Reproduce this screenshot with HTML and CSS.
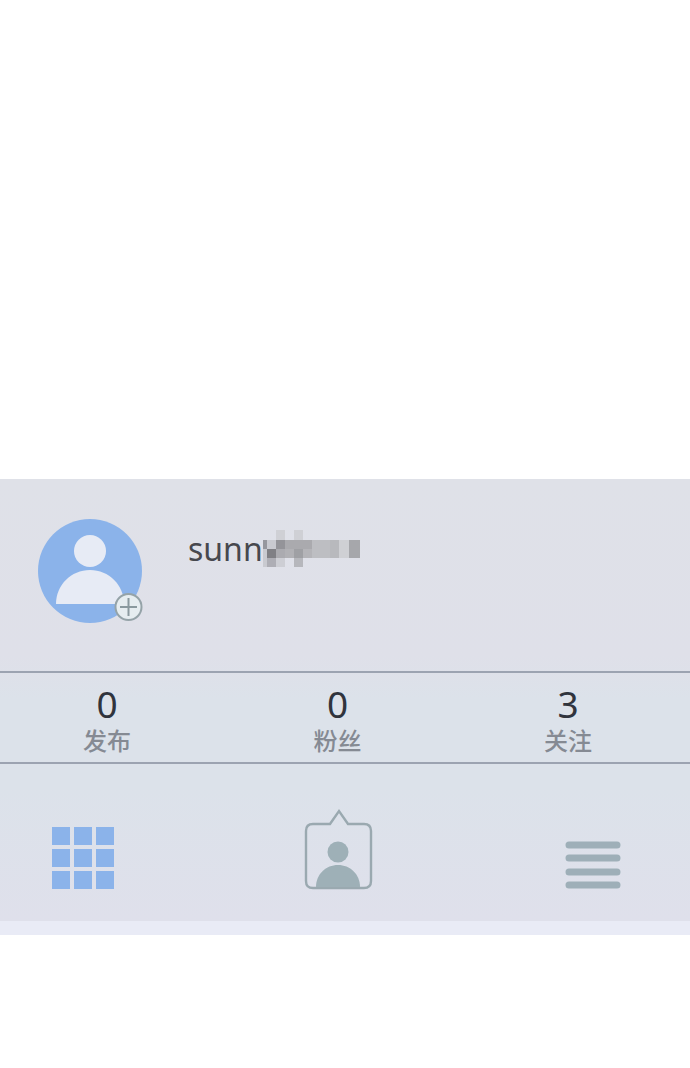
FILE: index.html
```html
<!DOCTYPE html>
<html lang="zh-CN">

<head>
    <meta charset="UTF-8">
    <meta name="viewport" content="width=device-width, initial-scale=1.0">
    <title>sunn</title>
    <link rel="stylesheet" href="styles.css">
</head>

<body>
    <main class="profile">
        <header class="user">
            <button class="avatar" aria-label="avatar">
                <svg width="106" height="106" viewBox="0 0 106 106">
                    <circle cx="53" cy="53" r="52" fill="#8bb3ea" />
                    <circle cx="53" cy="33" r="16" fill="#e7ebf5" />
                    <path d="M19 86c0-19 15-34 34-34s34 15 34 34z" fill="#e7ebf5" />
                    <circle cx="91.500" cy="89" r="13" fill="#e6edf0" stroke="#95a3a8" stroke-width="2" />
                    <path d="M83 89h17M91.500 80v18" stroke="#8a999e" stroke-width="2" />
                </svg>
            </button>
            <h1 class="name">
                <span>sunn</span>
                <!-- hidden part of the name -->
                <svg width="97" height="37" viewBox="0 0 97 37" shape-rendering="crispEdges">
                    <path d="M0 10h4v9H0z" fill="#96979d" />
                    <path d="M4 10h9v9H4z" fill="#c9cad0" />
                    <path d="M0 19h4v18H0z" fill="#c9cad0" />
                    <path d="M4 19h9v9H4z" fill="#808085" />
                    <path d="M4 28h9v9H4z" fill="#aeaeb5" />
                    <path d="M13 0h9v10h-9zM31 0h9v10h-9z" fill="#cfd0d5" />
                    <path d="M13 10h9v9h-9z" fill="#949499" />
                    <path d="M22 10h27v9H22z" fill="#aaaaae" />
                    <path d="M13 19h9v9h-9z" fill="#ababb0" />
                    <path d="M22 19h9v9h-9z" fill="#b1b1b5" />
                    <path d="M31 19h9v9h-9z" fill="#9fa0a4" />
                    <path d="M40 19h9v9h-9z" fill="#b4b4b8" />
                    <path d="M13 28h9v9h-9z" fill="#cdced4" />
                    <path d="M31 28h9v9h-9z" fill="#b6b7bc" />
                    <path d="M49 10h18v18H49z" fill="#bdbec2" />
                    <path d="M67 10h9v18h-9z" fill="#b8b9bd" />
                    <path d="M76 10h10v18H76z" fill="#cfd0d4" />
                    <path d="M86 10h11v18H86z" fill="#a6a7ab" />
                </svg>
            </h1>
        </header>

        <section class="stats">
            <a class="stat" href="#posts">
                <span class="count">0</span>
                <span class="label">发布</span>
            </a>
            <a class="stat" href="#fans">
                <span class="count">0</span>
                <span class="label">粉丝</span>
            </a>
            <a class="stat" href="#following">
                <span class="count">3</span>
                <span class="label">关注</span>
            </a>
        </section>

        <nav class="tabs">
            <button class="tab" aria-label="grid">
                <svg width="62" height="82" viewBox="0 0 62 82">
                    <path fill="#8bb3ea" d="M0 18h18v18H0zM22 18h18v18H22zM44 18h18v18H44zM0 40h18v18H0zM22 40h18v18H22zM44 40h18v18H44zM0 62h18v18H0zM22 62h18v18H22zM44 62h18v18H44z" />
                </svg>
            </button>
            <button class="tab" aria-label="tagged">
                <svg width="70" height="82" viewBox="0 0 70 82">
                    <path d="M8 15h17l9-13 9 13h16q7 0 7 7v50q0 7-7 7H8q-7 0-7-7V22q0-7 7-7z" fill="none" stroke="#9aa9b0" stroke-width="2.4" />
                    <circle cx="33" cy="43" r="10.500" fill="#9eb0b7" />
                    <path d="M11 78c0-13 10-22 22-22s22 9 22 22z" fill="#9eb0b7" />
                </svg>
            </button>
            <button class="tab" aria-label="list">
                <svg width="56" height="82" viewBox="0 0 56 82">
                    <path d="M4 36h48M4 49h48M4 63h48M4 76h48" stroke="#9eafb8" stroke-width="7" stroke-linecap="round" />
                </svg>
            </button>
        </nav>
    </main>
</body>

</html>
```
FILE: styles.css
```css
* {
    margin: 0;
    padding: 0;
    box-sizing: border-box;
}

body {
    background-color: white;
    font-family: "Noto Sans", "Noto Sans CJK SC", sans-serif;
    padding-top: 479px;
}

button {
    border: none;
    background: none;
    cursor: pointer;
}

svg {
    display: block;
    overflow: visible;
}

.profile {
    background-image: linear-gradient(#dfe1e8, #dfe0e9 40%, #dce2ea 50%, #dce2ea 70%, #dfe0eb);
    border-bottom: 14px solid #e9ebf6;
}

.user {
    display: flex;
    align-items: flex-start;
    gap: 45px;
    height: 192px;
    padding: 39px 37px;
}

.name {
    display: flex;
    align-items: center;
    height: 60px;
    color: #47484e;
    font-size: 32px;
    font-weight: 400;
}

.stats {
    display: flex;
    justify-content: space-between;
    padding: 9px 98px 8px 83px;
    border-top: 2px solid #9ca3b1;
    border-bottom: 2px solid #9ca3b1;
}

.stat {
    display: flex;
    flex-direction: column;
    align-items: center;
    text-decoration: none;
}

.count {
    color: #30343d;
    font-size: 37px;
    line-height: 44px;
}

.label {
    color: #858a93;
    font-family: "Noto Sans CJK SC", sans-serif;
    font-size: 24px;
    font-weight: 500;
    line-height: 28px;
}

.tabs {
    display: flex;
    justify-content: space-between;
    padding: 45px 69px 30px 52px;
}
```
